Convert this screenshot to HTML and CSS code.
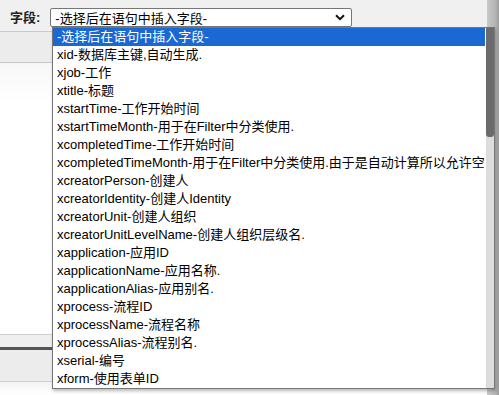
FILE: index.html
```html
<html lang="zh-cn">
<head>
    <meta charset="UTF-8">
    <meta name="viewport" content="width=device-width, initial-scale=1.0">
    <title>字段</title>
    <link rel="stylesheet" href="styles.css">
</head>
<body>
    <div class="pagina">
        <div class="conteudo">
            <div class="barra-campo">
                <span class="rotulo">字段:</span>
                <div class="caixa-select">
                    <span>-选择后在语句中插入字段-</span>
                    <svg class="seta" width="10" height="7" viewBox="0 0 10 7"><path d="M1 1.2 L5 5.2 L9 1.2" fill="none" stroke="#111" stroke-width="2"/></svg>
                </div>
            </div>
            <div class="faixa"></div>
            <div class="area-branca"></div>
            <div class="faixa-baixa"></div>
            <div class="linha-escura"></div>
            <div class="faixa-rodape"></div>
            <div class="resto"></div>
        </div>
        <div class="barra-rolagem"></div>
    </div>

    <div class="lista-campos">
        <ul class="opcoes">
            <li class="ativo">-选择后在语句中插入字段-</li>
            <li>xid-数据库主键,自动生成.</li>
            <li>xjob-工作</li>
            <li>xtitle-标题</li>
            <li>xstartTime-工作开始时间</li>
            <li>xstartTimeMonth-用于在Filter中分类使用.</li>
            <li>xcompletedTime-工作开始时间</li>
            <li>xcompletedTimeMonth-用于在Filter中分类使用.由于是自动计算所以允许空</li>
            <li>xcreatorPerson-创建人</li>
            <li>xcreatorIdentity-创建人Identity</li>
            <li>xcreatorUnit-创建人组织</li>
            <li>xcreatorUnitLevelName-创建人组织层级名.</li>
            <li>xapplication-应用ID</li>
            <li>xapplicationName-应用名称.</li>
            <li>xapplicationAlias-应用别名.</li>
            <li>xprocess-流程ID</li>
            <li>xprocessName-流程名称</li>
            <li>xprocessAlias-流程别名.</li>
            <li>xserial-编号</li>
            <li>xform-使用表单ID</li>
        </ul>
        <div class="trilho">
            <div class="polegar"></div>
        </div>
    </div>
</body>
</html>
```

FILE: styles.css
```css
body {
    margin: 0;
    height: 395px;
    overflow: hidden;
    font-family: "Liberation Sans", "Noto Sans CJK SC", sans-serif;
    font-size: 13px;
    color: #000;
    background-color: #fff;
}
.pagina {
    display: flex;
    height: 395px;
}
.conteudo {
    flex: 1;
    display: flex;
    flex-direction: column;
}
.barra-campo {
    height: 32px;
    box-sizing: border-box;
    display: flex;
    align-items: center;
    padding: 0 0 0 10px;
    gap: 10px;
    background-color: #f0f0f0;
    border-bottom: 1px solid #c8c8c8;
}
.rotulo {
    font-weight: bold;
    color: #222;
    margin-top: 2px;
}
.caixa-select {
    width: 302px;
    height: 19px;
    box-sizing: border-box;
    border: 1px solid #767676;
    border-radius: 2px;
    background-color: #fff;
    display: flex;
    align-items: center;
    justify-content: space-between;
    padding: 0 6px 0 4px;
    margin-top: 3px;
    white-space: nowrap;
}
.faixa {
    height: 31px;
    box-sizing: border-box;
    background-color: #ececec;
    border-bottom: 1px solid #c8c8c8;
}
.area-branca {
    height: 271px;
    background: linear-gradient(#f7f7f7, #fff 40px);
    border-bottom: 1px solid #cfcfcf;
}
.faixa-baixa {
    height: 12px;
    background-color: #efefef;
}
.linha-escura {
    height: 3px;
    background-color: #555;
}
.faixa-rodape {
    height: 31px;
    background-color: #ececec;
    border-bottom: 1px solid #cfcfcf;
}
.resto {
    flex: 1;
    background: linear-gradient(#f3f3f3, #fff);
}
.barra-rolagem {
    width: 12px;
    background: linear-gradient(to right, #c9c9c9, #b4b4b4 70%, #9c9c9c);
}

.lista-campos {
    position: absolute;
    top: 27px;
    left: 52px;
    width: 443px;
    height: 362px;
    box-sizing: border-box;
    border: 1px solid #767676;
    background-color: #fff;
    box-shadow: 1px 2px 3px rgba(0, 0, 0, 0.25);
    display: flex;
}
.opcoes {
    flex: 1;
    list-style: none;
    margin: 0;
    padding: 0;
}
.opcoes li {
    height: 18px;
    line-height: 18px;
    padding-left: 4px;
    white-space: nowrap;
    overflow: hidden;
}
.opcoes li.ativo {
    background-color: #1a68d2;
    color: #fff;
}
.trilho {
    width: 8px;
    background-color: #dcdcdc;
    border-left: 1px solid #fff;
}
.polegar {
    height: 109px;
    background-color: #6b6b6b;
    border-radius: 0 0 3px 3px;
}
```
